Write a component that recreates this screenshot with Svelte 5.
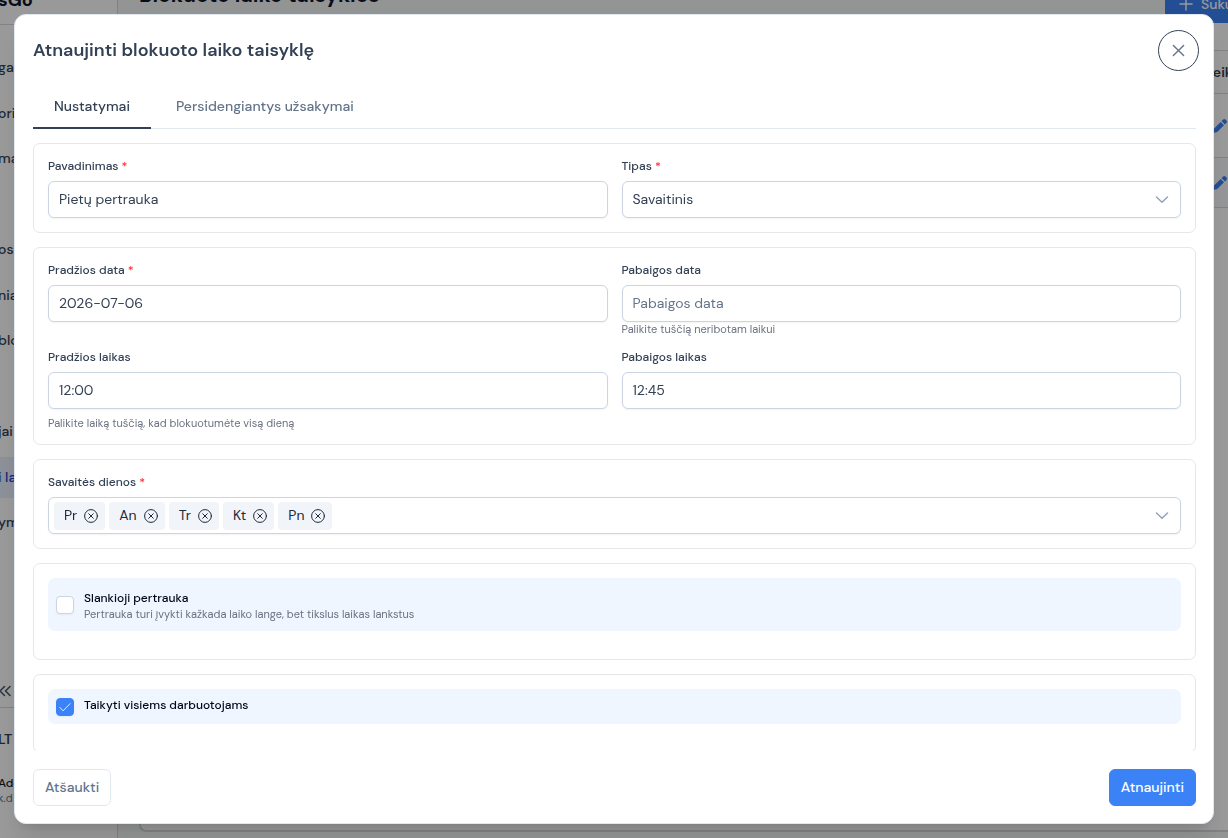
<script lang="ts">
  type Day = { id: number; label: string };

  // null rows are menu entries without a visible caption
  const menu: (string | null)[] = ['ga', 'oriu', 'ma', null, 'os', 'nia', 'blo', null, 'jai', 'i la', 'ym'];
  const activeMenu = 9;

  let tab = $state('settings');
  let name = $state('Pietų pertrauka');
  let type = $state('weekly');
  let startDate = $state('2026-07-06');
  let endDate = $state('');
  let startTime = $state('12:00');
  let endTime = $state('12:45');
  let floating = $state(false);
  let applyToAll = $state(true);
  let days = $state<Day[]>([
    { id: 1, label: 'Pr' },
    { id: 2, label: 'An' },
    { id: 3, label: 'Tr' },
    { id: 4, label: 'Kt' },
    { id: 5, label: 'Pn' }
  ]);

  function removeDay(id: number) {
    days = days.filter(d => d.id !== id);
  }
</script>

{#snippet chevron()}
  <svg class="chevron" viewBox="0 0 14 14" aria-hidden="true">
    <path d="M1.5 4 7 9.3 12.5 4" />
  </svg>
{/snippet}

{#snippet pencil()}
  <svg class="pencil" viewBox="0 0 14 14" aria-hidden="true">
    <path d="M0 14l.9-4.2 6.8-6.8 3.3 3.3-6.8 6.8zM8.6 2.1l1.5-1.5a1.7 1.7 0 0 1 2.4 0l.9.9a1.7 1.7 0 0 1 0 2.4l-1.5 1.5z" />
  </svg>
{/snippet}

{#snippet check()}
  <svg class="check" viewBox="0 0 14 14" aria-hidden="true">
    <path d="M1 7.5 4.8 11.5 13 3" />
  </svg>
{/snippet}

<div class="page">
  <aside class="sidebar">
    <div class="brand">sGo</div>
    <nav class="menu">
      {#each menu as item, i}
        <a href="#menu-{i}" class="menu-item" class:active={i === activeMenu} aria-hidden={item === null}>{item ?? ''}</a>
      {/each}
    </nav>
    <div class="collapse">
      <svg viewBox="0 0 12 12" aria-hidden="true"><path d="M4.5 1.5 0 6l4.5 4.5M10 1.5 5.5 6l4.5 4.5" /></svg>
    </div>
    <div class="locale">LT</div>
    <div class="user">
      <span class="user-name">Ado</span>
      <span class="user-mail">k.d</span>
    </div>
  </aside>

  <main class="main">
    <header class="main-head">
      <h1>Blokuoto laiko taisyklės</h1>
      <button type="button" class="create">
        <svg viewBox="0 0 14 14" aria-hidden="true"><path d="M7 1v12M1 7h12" /></svg>
        Suku
      </button>
    </header>
    <section class="list">
      <div class="list-head"><span>Veik</span></div>
      <div class="list-row">{@render pencil()}</div>
      <div class="list-row striped">{@render pencil()}</div>
    </section>
  </main>
</div>

<div class="overlay">
  <div class="dialog" role="dialog" aria-modal="true" aria-labelledby="dialog-title">
    <header class="dialog-head">
      <h2 id="dialog-title">Atnaujinti blokuoto laiko taisyklę</h2>
      <button type="button" class="close" aria-label="Uždaryti">
        <svg viewBox="0 0 14 14" aria-hidden="true"><path d="M1.5 1.5l11 11M12.5 1.5l-11 11" /></svg>
      </button>
    </header>

    <div class="dialog-body">
      <div class="tabs" role="tablist">
        <button type="button" role="tab" class="tab" class:active={tab === 'settings'}
                aria-selected={tab === 'settings'} onclick={() => (tab = 'settings')}>Nustatymai</button>
        <button type="button" role="tab" class="tab" class:active={tab === 'overlaps'}
                aria-selected={tab === 'overlaps'} onclick={() => (tab = 'overlaps')}>Persidengiantys užsakymai</button>
      </div>

      <form class="cards" id="rule-form">
        <section class="card grid">
          <div class="field">
            <label for="name">Pavadinimas <span class="req">*</span></label>
            <input id="name" class="control" type="text" bind:value={name} />
          </div>
          <div class="field">
            <label for="type">Tipas <span class="req">*</span></label>
            <div class="select">
              <select id="type" class="control" bind:value={type}>
                <option value="weekly">Savaitinis</option>
              </select>
              {@render chevron()}
            </div>
          </div>
        </section>

        <section class="card grid">
          <div class="field">
            <label for="start-date">Pradžios data <span class="req">*</span></label>
            <input id="start-date" class="control" type="text" bind:value={startDate} />
          </div>
          <div class="field">
            <label for="end-date">Pabaigos data</label>
            <input id="end-date" class="control" type="text" placeholder="Pabaigos data" bind:value={endDate} />
            <small class="hint">Palikite tuščią neribotam laikui</small>
          </div>
          <div class="field">
            <label for="start-time">Pradžios laikas</label>
            <input id="start-time" class="control" type="text" bind:value={startTime} />
            <small class="hint spaced">Palikite laiką tuščią, kad blokuotumėte visą dieną</small>
          </div>
          <div class="field">
            <label for="end-time">Pabaigos laikas</label>
            <input id="end-time" class="control" type="text" bind:value={endTime} />
          </div>
        </section>

        <section class="card">
          <div class="field">
            <label for="days">Savaitės dienos <span class="req">*</span></label>
            <div class="control multi">
              {#each days as day (day.id)}
                <span class="chip">
                  <span class="chip-label">{day.label}</span>
                  <button type="button" aria-label="Pašalinti {day.label}" onclick={() => removeDay(day.id)}>
                    <svg viewBox="0 0 14 14" aria-hidden="true">
                      <circle cx="7" cy="7" r="6.4" />
                      <path d="M4.7 4.7l4.6 4.6M9.3 4.7l-4.6 4.6" />
                    </svg>
                  </button>
                </span>
              {/each}
              <button type="button" id="days" class="multi-toggle" aria-haspopup="listbox">
                {@render chevron()}
              </button>
            </div>
          </div>
        </section>

        <section class="card toggles">
          <label class="toggle" for="floating">
            <span class="box">
              <input id="floating" type="checkbox" bind:checked={floating} />
              {@render check()}
            </span>
            <span class="toggle-text described">
              <span class="toggle-title">Slankioji pertrauka</span>
              <small class="hint">Pertrauka turi įvykti kažkada laiko lange, bet tikslus laikas lankstus</small>
            </span>
          </label>
        </section>

        <section class="card toggles">
          <label class="toggle" for="apply-all">
            <span class="box">
              <input id="apply-all" type="checkbox" bind:checked={applyToAll} />
              {@render check()}
            </span>
            <span class="toggle-text">
              <span class="toggle-title">Taikyti visiems darbuotojams</span>
            </span>
          </label>
        </section>
      </form>
    </div>

    <footer class="dialog-foot">
      <button type="button" class="btn">Atšaukti</button>
      <button type="submit" form="rule-form" class="btn primary">Atnaujinti</button>
    </footer>
  </div>
</div>

<style>
  :global(body) {
    font-family: "DM Sans", Inter, "Liberation Sans", sans-serif;
    font-size: 14px;
    line-height: 20px;
    color: #334155;
  }

  :global(*), :global(*::before), :global(*::after) { box-sizing: border-box; }

  button, input, select { font: inherit; color: inherit; }
  button { cursor: pointer; }
  h1, h2 { margin: 0; }

  svg {
    display: block;
    fill: none;
    stroke: currentColor;
    stroke-linecap: round;
    stroke-linejoin: round;
  }

  /* page behind the dialog */
  .page {
    display: flex;
    height: 100vh;
    overflow: hidden;
    background: #f5f9f7;
  }

  .sidebar {
    display: flex;
    flex-direction: column;
    flex: none;
    width: 118px;
    background: #fff;
    border-right: 1px solid #d5d9de;
    overflow: hidden;
    text-indent: -2px;
  }

  .brand {
    height: 25px;
    border-bottom: 1px solid #d5d9de;
    font-size: 18px;
    font-weight: 800;
    line-height: 1px;
    color: #0f172a;
  }

  .menu {
    display: flex;
    flex-direction: column;
    justify-content: space-between;
    height: 496px;
    margin-top: 22px;
  }

  .menu-item {
    height: 41px;
    line-height: 41px;
    font-weight: 500;
    color: #334155;
    text-decoration: none;
    white-space: nowrap;
  }

  .menu-item.active { background: #eaf0ff; color: #2444d8; }

  .collapse {
    margin-top: auto;
    padding: 10px 0;
    border-bottom: 1px solid #d5d9de;
    color: #475569;
  }

  .collapse svg { width: 12px; height: 12px; stroke-width: 1.5; }

  .locale { padding: 21px 0 23px; font-weight: 600; }

  .user {
    display: flex;
    flex-direction: column;
    padding: 4px 0 32px;
    font-size: 12px;
    line-height: 15px;
  }

  .user-name { font-weight: 500; color: #0f172a; }
  .user-mail { font-size: 11px; color: #64748b; }

  .main {
    display: flex;
    flex-direction: column;
    flex: 1;
    min-width: 0;
    padding: 0 0 6px 21px;
  }

  .main-head {
    display: flex;
    align-items: flex-start;
    justify-content: space-between;
    height: 23px;
  }

  .main-head h1 { margin-top: -5px; font-size: 21px; font-weight: 700; line-height: 1px; color: #0f172a; }

  .create {
    display: flex;
    align-items: center;
    gap: 8px;
    width: 63px;
    height: 23px;
    padding: 0 0 15px 14px;
    border: 0;
    background: #3b82f6;
    color: #fff;
    font-weight: 500;
    white-space: nowrap;
    overflow: hidden;
  }

  .create svg { flex: none; width: 14px; height: 14px; stroke-width: 1.5; }

  .list {
    flex: 1;
    padding-top: 27px;
    border: 2px solid #d5d9de;
    border-width: 0 0 2px 2px;
    border-bottom-left-radius: 7px;
    background: #fff;
  }

  .list-head, .list-row {
    display: flex;
    align-items: center;
    justify-content: flex-end;
    border-top: 1px solid #d5d9de;
  }

  .list-head { height: 43px; font-weight: 600; }
  .list-head span { width: 24px; }
  .list-row { height: 64px; color: #3b82f6; }
  .list-row.striped { height: 51px; background: #f8fafc; border-bottom: 1px solid #d5d9de; }
  .pencil { width: 14px; height: 14px; margin-right: 1px; fill: currentColor; stroke: none; }

  /* dialog */
  .overlay {
    position: fixed;
    inset: 0;
    display: flex;
    padding: 14px;
    background: rgba(0, 0, 0, 0.4);
  }

  .dialog {
    display: flex;
    flex-direction: column;
    flex: 1;
    min-width: 0;
    border: 1px solid #e2e8f0;
    border-radius: 12px;
    background: #fff;
    box-shadow: 0 20px 25px -5px rgba(0, 0, 0, 0.1), 0 8px 10px -6px rgba(0, 0, 0, 0.1);
  }

  .dialog-head {
    display: flex;
    align-items: center;
    justify-content: space-between;
    padding: 15px 14px 14px 18px;
  }

  .dialog-head h2 {
    padding-bottom: 2px;
    font-size: 18px;
    font-weight: 600;
    line-height: 24px;
  }

  .close {
    display: grid;
    place-items: center;
    width: 41px;
    height: 41px;
    padding: 0;
    border: 1px solid #334155;
    border-radius: 50%;
    background: none;
    color: #64748b;
  }

  .close svg { width: 13px; height: 13px; stroke-width: 1.5; }

  .dialog-body {
    display: flex;
    flex-direction: column;
    flex: 1;
    min-height: 0;
    padding: 0 17px 0 18px;
    overflow: hidden;
  }

  .tabs {
    display: flex;
    flex: none;
    gap: 4px;
    border-bottom: 1px solid #e2e8f0;
  }

  .tab {
    margin-bottom: -1px;
    padding: 11px 21px;
    border: 0;
    border-bottom: 2px solid transparent;
    background: none;
    color: #64748b;
    font-weight: 500;
  }

  .tab.active { border-color: #334155; color: #334155; }

  .cards {
    display: flex;
    flex-direction: column;
    gap: 14px;
    padding-top: 14px;
  }

  .card {
    padding: 14px;
    border: 1px solid #e5e7eb;
    border-radius: 7px;
  }

  .grid {
    display: grid;
    grid-template-columns: 1fr 1fr;
    gap: 13px 14px;
  }

  .field { display: flex; flex-direction: column; min-width: 0; }

  .field label {
    margin-bottom: 7px;
    font-size: 12px;
    font-weight: 500;
    line-height: 16px;
  }

  .req { color: #fb2c36; }

  .control {
    width: 100%;
    height: 37px;
    padding: 0 10px 2px;
    border: 1px solid #cbd5e1;
    border-radius: 6px;
    background: #fff;
    box-shadow: 0 1px 2px rgba(18, 18, 23, 0.05);
  }

  .control::placeholder { color: #64748b; opacity: 1; }

  .hint {
    font-size: 11px;
    line-height: 14px;
    color: #6b7280;
  }

  .hint.spaced { margin-top: 7px; }

  .select { display: grid; align-items: center; }
  .select > :global(*) { grid-area: 1 / 1; }
  .select select { appearance: none; }
  .select .chevron { justify-self: end; margin-right: 12px; pointer-events: none; }

  .chevron { width: 14px; height: 14px; color: #94a3b8; stroke-width: 1.5; }

  .multi {
    display: flex;
    align-items: center;
    gap: 4px;
    padding: 0 0 0 5px;
  }

  .chip {
    display: flex;
    align-items: center;
    gap: 7px;
    height: 28px;
    padding: 0 7px 0 10px;
    border-radius: 4px;
    background: #f1f5f9;
    color: #1e293b;
  }

  .chip-label { padding-bottom: 2px; }
  .chip button { padding: 0; border: 0; background: none; }
  .chip svg { width: 14px; height: 14px; }

  .multi-toggle {
    display: flex;
    align-items: center;
    justify-content: flex-end;
    flex: 1;
    height: 100%;
    padding: 0 11px;
    border: 0;
    background: none;
  }

  .toggles { padding-bottom: 28px; }

  .toggle {
    display: flex;
    align-items: center;
    gap: 10px;
    min-height: 35px;
    padding: 8px;
    border-radius: 7px;
    background: #eff6ff;
  }

  .box { display: grid; flex: none; place-items: center; }
  .box > :global(*) { grid-area: 1 / 1; }

  .box input {
    appearance: none;
    width: 18px;
    height: 18px;
    margin: 0;
    border: 1px solid #cbd5e1;
    border-radius: 4px;
    background: #fff;
    box-shadow: 0 1px 2px rgba(18, 18, 23, 0.05);
  }

  .box input:checked { border-color: #3b82f6; background: #3b82f6; }

  .check { width: 12px; height: 12px; color: #fff; pointer-events: none; }

  .toggle-text { display: flex; flex-direction: column; align-self: flex-start; gap: 1px; }
  .toggle-text.described { padding: 4px 0 2px; }
  .toggle-title { font-size: 12px; font-weight: 500; line-height: 16px; color: #020617; }

  .dialog-foot {
    display: flex;
    justify-content: space-between;
    padding: 18px 17px 17px 18px;
  }

  .btn {
    height: 37px;
    padding: 0 11px 2px;
    border: 1px solid #e2e8f0;
    border-radius: 6px;
    background: #fff;
    color: #64748b;
    font-weight: 500;
  }

  .btn.primary { border-color: #3b82f6; background: #3b82f6; color: #fff; }
</style>
